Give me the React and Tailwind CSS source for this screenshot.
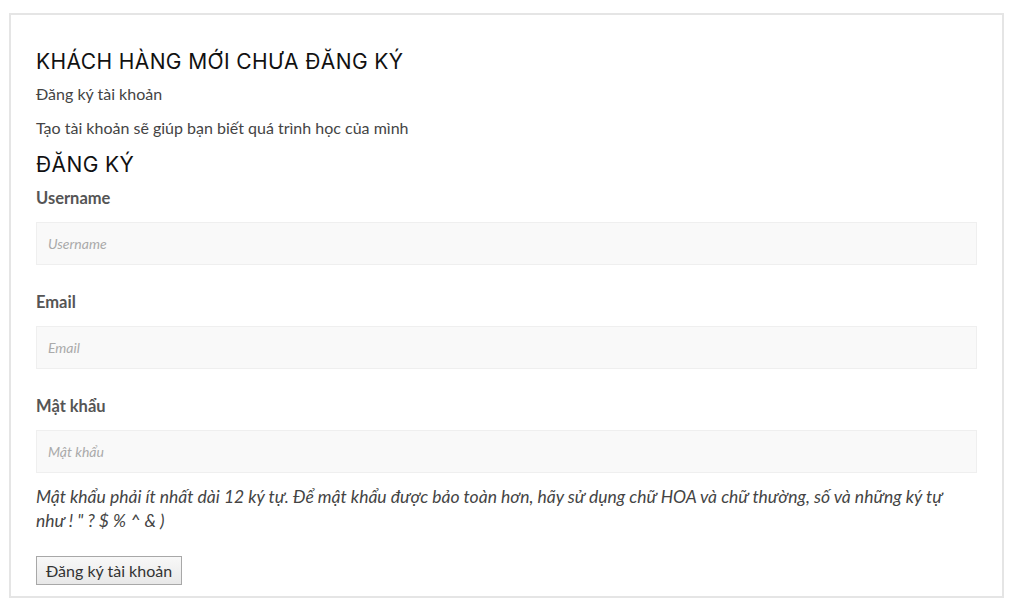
export default function App() {
  const heading = { fontFamily: '"Inter", "Noto Sans", sans-serif' };
  const body = { fontFamily: 'Lato, "Noto Sans", sans-serif' };
  const inputCls =
    "mt-[12px] h-[43px] w-full bg-[#f9f9f9] border border-[#efefef] px-[11px] text-[14px] italic placeholder:text-[#aaa] outline-none";
  return (
    <div className="w-[1024px] h-[611px] bg-white pt-[13px] pl-[9px]" style={body}>
      <div className="w-[995px] h-[585px] border-2 border-[#e5e5e5] px-[25px] pt-[33px]">
        <h2 className="text-[21px] leading-[28px] font-normal text-[#111] uppercase tracking-[0.4px]" style={heading}>
          KHÁCH HÀNG MỚI CHƯA ĐĂNG KÝ
        </h2>
        <p className="mt-[6px] text-[16px] leading-[24px] text-[#444]">Đăng ký tài khoản</p>
        <p className="mt-[10px] text-[16px] leading-[24px] text-[#444]">Tạo tài khoản sẽ giúp bạn biết quá trình học của mình</p>
        <h3 className="mt-[11px] text-[21px] leading-[28px] font-normal text-[#111] uppercase tracking-[0.4px]" style={heading}>
          ĐĂNG KÝ
        </h3>
        <form className="flex flex-col">
          <label className="mt-[7px] text-[16.5px] leading-[24px] font-bold text-[#555]">Username</label>
          <input className={inputCls} placeholder="Username" />
          <label className="mt-[25px] text-[16.5px] leading-[24px] font-bold text-[#555]">Email</label>
          <input className={inputCls} placeholder="Email" />
          <label className="mt-[25px] text-[16.5px] leading-[24px] font-bold text-[#555]">Mật khẩu</label>
          <input className={inputCls} placeholder="Mật khẩu" type="password" />
          <p className="mt-[12px] text-[17.5px] leading-[24px] italic text-[#444]">
            Mật khẩu phải ít nhất dài 12 ký tự. Để mật khẩu được bảo toàn hơn, hãy sử dụng chữ HOA và chữ thường, số và những ký tự
            <br />
            như ! " ? $ % ^ &amp; )
          </p>
          <div className="mt-[23px]">
            <button
              type="button"
              className="h-[29px] px-[9px] border border-[#a8a8a8] bg-gradient-to-b from-[#f8f8f8] to-[#e8e8e8] text-[16px] text-[#333]"
            >
              Đăng ký tài khoản
            </button>
          </div>
        </form>
      </div>
    </div>
  );
}
